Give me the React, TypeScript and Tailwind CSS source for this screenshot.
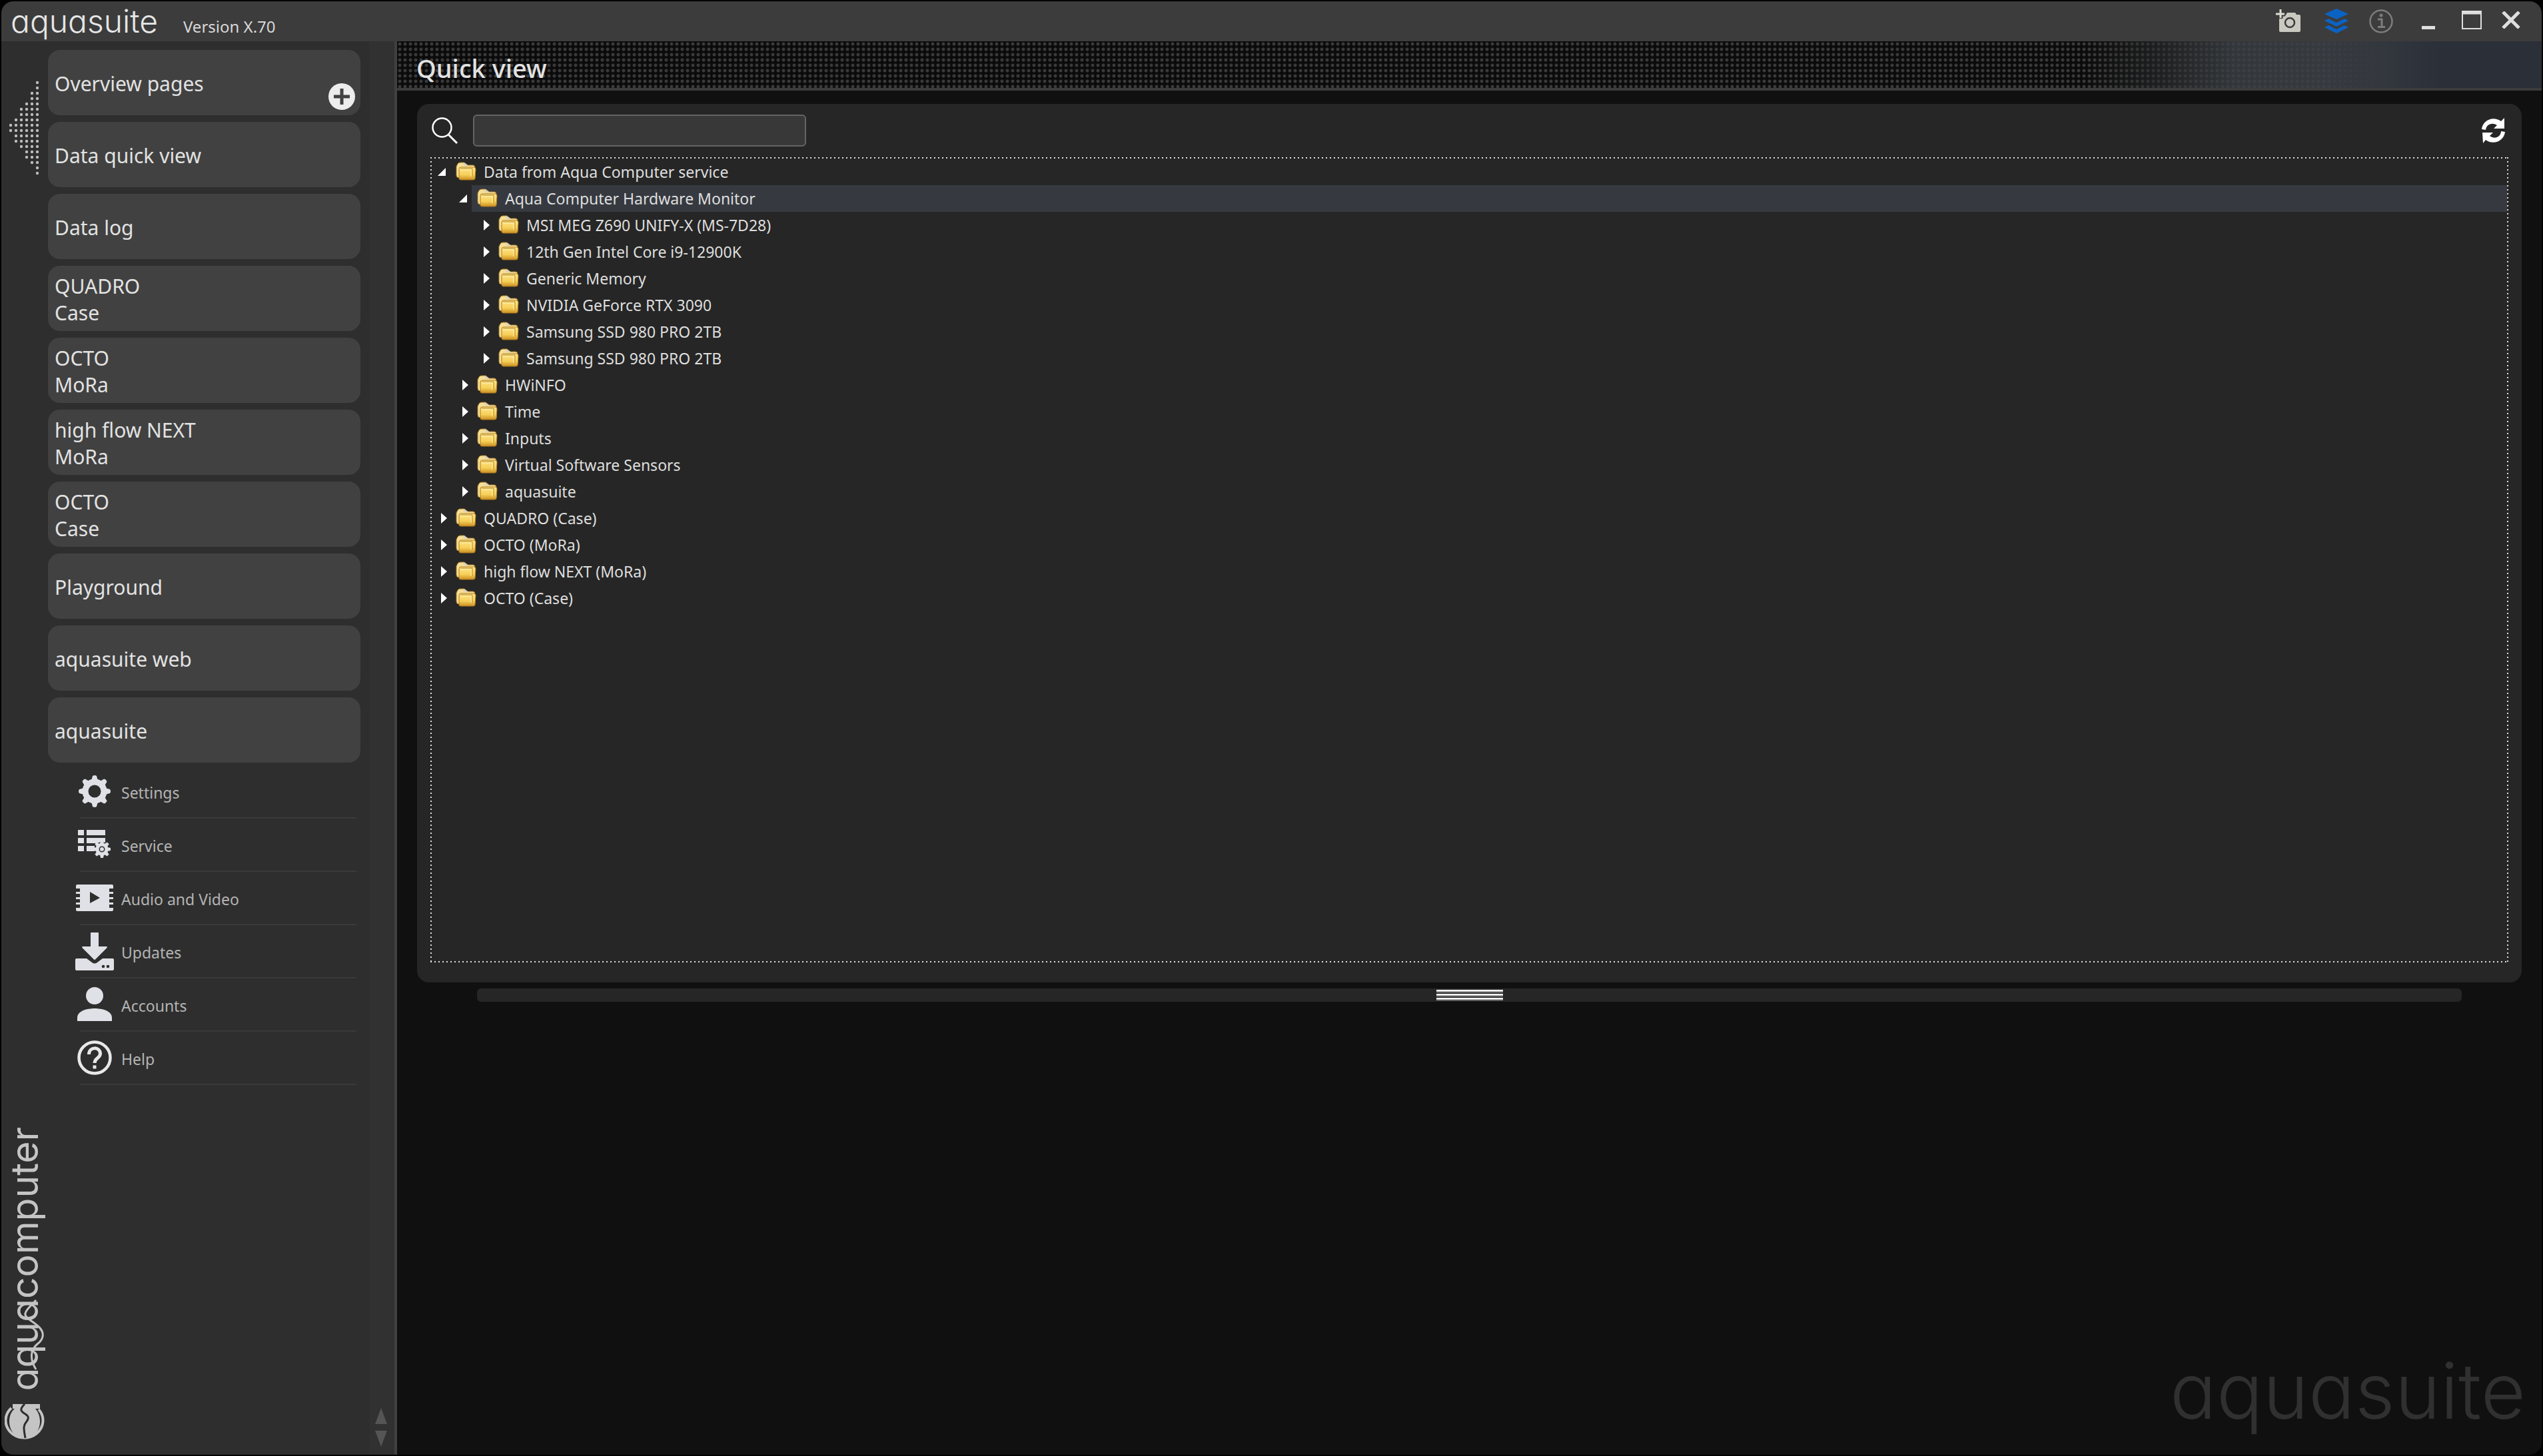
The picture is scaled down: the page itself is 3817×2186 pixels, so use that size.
import { useState } from 'react';
import clsx from 'clsx';

type TreeNode = { label: string; level: number; open?: boolean };

const devices = [
  ['Overview pages'],
  ['Data quick view'],
  ['Data log'],
  ['QUADRO', 'Case'],
  ['OCTO', 'MoRa'],
  ['high flow NEXT', 'MoRa'],
  ['OCTO', 'Case'],
  ['Playground'],
  ['aquasuite web'],
  ['aquasuite'],
];

const nodes: TreeNode[] = [
  { label: 'Data from Aqua Computer service', level: 0, open: true },
  { label: 'Aqua Computer Hardware Monitor', level: 1, open: true },
  { label: 'MSI MEG Z690 UNIFY-X (MS-7D28)', level: 2 },
  { label: '12th Gen Intel Core i9-12900K', level: 2 },
  { label: 'Generic Memory', level: 2 },
  { label: 'NVIDIA GeForce RTX 3090', level: 2 },
  { label: 'Samsung SSD 980 PRO 2TB', level: 2 },
  { label: 'Samsung SSD 980 PRO 2TB', level: 2 },
  { label: 'HWiNFO', level: 1 },
  { label: 'Time', level: 1 },
  { label: 'Inputs', level: 1 },
  { label: 'Virtual Software Sensors', level: 1 },
  { label: 'aquasuite', level: 1 },
  { label: 'QUADRO (Case)', level: 0 },
  { label: 'OCTO (MoRa)', level: 0 },
  { label: 'high flow NEXT (MoRa)', level: 0 },
  { label: 'OCTO (Case)', level: 0 },
];

const indents = ['ml-0', 'ml-[32px]', 'ml-[64px]'];

// number of lit dots per row of the collapse arrow
const arrowRows = [1, 1, 2, 2, 3, 4, 4, 5, 6, 6, 5, 5, 4, 3, 3, 2, 1, 1];

function CollapseArrow() {
  return (
    <svg width="48" height="146" viewBox="0 0 48 146" fill="#bdbdbd" aria-hidden="true">
      {arrowRows.map((count, row) =>
        Array.from({ length: count }, (_, i) => (
          <circle key={`${row}-${i}`} cx={44 - i * 8} cy={4 + row * 8} r="2.2" />
        )),
      )}
    </svg>
  );
}

function FolderIcon() {
  return (
    <svg width="32" height="30" viewBox="0 0 32 30" aria-hidden="true">
      <defs>
        <linearGradient id="folder" x1="0" y1="0" x2="0" y2="1">
          <stop offset="0" stopColor="#fde68c" />
          <stop offset="0.6" stopColor="#f7cf58" />
          <stop offset="1" stopColor="#c98f22" />
        </linearGradient>
      </defs>
      <path d="M2 7 4 3Q5 1 8 1H14L19 5H27Q30 5 30 9V24H6Q2 24 2 20Z" fill="#f6df94" stroke="#a67a2b" />
      <path d="M13 1 19 5 17 7 12 4Z" fill="#d8d3c4" />
      <path d="M6 11Q6 8 9 8H28Q31 8 31 11L30 25Q30 27 27 27H9Q6 27 6 25Z" fill="url(#folder)" stroke="#b07a1f" />
      <path d="M8 10H26V22" fill="none" stroke="#b98a2c" />
      <path d="M8 12H24V22" fill="none" stroke="#fff3b5" />
    </svg>
  );
}

function SettingsIcon() {
  return (
    <svg width="48" height="48" viewBox="0 0 48 48" fill="#e0e1e6" aria-hidden="true">
      {[0, 45, 90, 135, 180, 225, 270, 315].map((a) => (
        <path key={a} d="M18 12 21 1Q24-1 27 1L30 12Z" transform={`rotate(${a} 24 24)`} />
      ))}
      <circle cx="24" cy="24" r="14" fill="none" stroke="#e0e1e6" strokeWidth="9" />
    </svg>
  );
}

function ServiceIcon() {
  return (
    <svg width="52" height="46" viewBox="0 0 52 46" fill="#e0e1e6" aria-hidden="true">
      <path d="M1 1h9v8H1zM1 13h9v8H1zM1 25h9v8H1zM14 1h28v8H14zM14 13h28v8H14zM14 25h12v8H14z" />
      <circle cx="37" cy="30" r="11" fill="#2e2e2e" />
      {[0, 45, 90, 135, 180, 225, 270, 315].map((a) => (
        <path key={a} d="M34 22 35 17H39L40 22Z" transform={`rotate(${a} 37 30)`} />
      ))}
      <circle cx="37" cy="30" r="7" fill="none" stroke="#e0e1e6" strokeWidth="5" />
      <circle cx="37" cy="30" r="3" />
    </svg>
  );
}

function VideoIcon() {
  return (
    <svg width="56" height="40" viewBox="0 0 56 40" aria-hidden="true">
      <rect width="56" height="40" rx="2" fill="#e0e1e6" />
      <path d="M0 6h6v5H0zM0 14h6v5H0zM0 22h6v5H0zM0 30h6v5H0zM50 6h6v5h-6zM50 14h6v5h-6zM50 22h6v5h-6zM50 30h6v5h-6z" fill="#2e2e2e" />
      <path d="M21 11 36 20 21 28Z" fill="#2e2e2e" />
    </svg>
  );
}

function UpdatesIcon() {
  return (
    <svg width="58" height="58" viewBox="0 0 58 58" fill="#e0e1e6" aria-hidden="true">
      <path d="M2 40H17L25 46Q29 49 33 46L41 40H56Q58 40 58 42V56Q58 58 56 58H2Q0 58 0 56V42Q0 40 2 40Z" />
      <path
        d="M22 2Q22 0 24 0H34Q36 0 36 2V21H47Q50 22 48 25L31 42Q29 44 27 42L10 25Q8 22 11 21H22Z"
        stroke="#2e2e2e"
        strokeWidth="2"
      />
      <circle cx="42" cy="52" r="2.3" fill="#2e2e2e" />
      <circle cx="49" cy="52" r="2.3" fill="#2e2e2e" />
    </svg>
  );
}

function AccountsIcon() {
  return (
    <svg width="52" height="52" viewBox="0 0 52 52" fill="#e0e1e6" aria-hidden="true">
      <circle cx="26" cy="13" r="13" />
      <path d="M0 51V46C0 36 14 32 26 32S52 36 52 46V51Z" />
    </svg>
  );
}

function HelpIcon() {
  return (
    <svg width="52" height="52" viewBox="0 0 52 52" fill="none" stroke="#e8e8e8" aria-hidden="true">
      <circle cx="26" cy="26" r="23.5" strokeWidth="4.5" />
      <path d="M17.5 21C17.5 9 34.5 9 34.5 20C34.5 27 26 26 26 34" strokeWidth="5" />
      <path d="M26 37.5V42.5" strokeWidth="5" />
    </svg>
  );
}

const menu = [
  { label: 'Settings', icon: <SettingsIcon /> },
  { label: 'Service', icon: <ServiceIcon /> },
  { label: 'Audio and Video', icon: <VideoIcon /> },
  { label: 'Updates', icon: <UpdatesIcon /> },
  { label: 'Accounts', icon: <AccountsIcon /> },
  { label: 'Help', icon: <HelpIcon /> },
];

function TitleBar() {
  return (
    <header className="flex h-[60px] shrink-0 items-center justify-between bg-[#3c3c3c] pl-[14px] pr-8">
      <div className="flex items-baseline gap-[38px]">
        <span className="font-[Inter] text-[48px] leading-[60px] font-light text-[#e6e6e6] [font-feature-settings:'cv11']">
          aquasuite
        </span>
        <span className="text-[24px] text-[#d8d8d8]">Version X.70</span>
      </div>
      <div className="flex items-center">
        <button aria-label="Add snapshot" className="mr-[34px]">
          <svg width="38" height="36" viewBox="0 0 38 36" aria-hidden="true">
            <path d="M5 10H14L17 5H29L31 8H35Q37 8 37 10V32Q37 34 35 34H7Q5 34 5 32Z" fill="#c9c9c0" />
            <circle cx="21" cy="20" r="7" fill="none" stroke="#3c3c3c" strokeWidth="2.5" />
            <path d="M7 0V14M0 7H14" stroke="#3c3c3c" strokeWidth="7" />
            <path d="M7 0V13M0 7H13" stroke="#dcdcd4" strokeWidth="3" />
          </svg>
        </button>
        <button aria-label="Layers" className="mr-[30px]">
          <svg width="38" height="40" viewBox="0 0 38 40" fill="#0a63c4" aria-hidden="true">
            <path d="M19 1 37 9 19 17 1 9Z" />
            <path d="M1 19 7 16 19 22 31 16 37 19 19 28Z" />
            <path d="M1 29 7 26 19 32 31 26 37 29 19 38Z" />
          </svg>
        </button>
        <button aria-label="Info" className="mr-[43px]">
          <svg width="36" height="36" viewBox="0 0 36 36" fill="none" stroke="#7d7d7d" aria-hidden="true">
            <circle cx="18" cy="18" r="16.5" strokeWidth="2.5" />
            <path d="M13 15H19V27M13 26.5H24" strokeWidth="3" />
            <circle cx="18" cy="9" r="2.5" fill="#7d7d7d" stroke="none" />
          </svg>
        </button>
        <div className="flex items-center pb-1">
          <button aria-label="Minimize" className="mr-10">
            <svg width="20" height="28" aria-hidden="true">
              <path d="M0 23h20v5H0z" fill="#dedede" />
            </svg>
          </button>
          <button aria-label="Maximize" className="mr-[30px]">
            <svg width="30" height="28" viewBox="0 0 30 28" fill="none" stroke="#dedede" aria-hidden="true">
              <rect x="1" y="1" width="28" height="26" strokeWidth="2" />
              <path d="M0 3H30" strokeWidth="5" />
            </svg>
          </button>
          <button aria-label="Close">
            <svg width="28" height="26" viewBox="0 0 28 26" stroke="#dedede" strokeWidth="5" aria-hidden="true">
              <path d="M2 1 26 25M26 1 2 25" />
            </svg>
          </button>
        </div>
      </div>
    </header>
  );
}

function Sidebar() {
  return (
    <aside className="flex w-[594px] shrink-0 border-r-4 border-[#404040] bg-[#2e2e2e]">
      <div className="flex w-[70px] shrink-0 flex-col items-start justify-between pt-[58px] pb-[18px]">
        <button aria-label="Collapse sidebar" className="ml-[10px]">
          <CollapseArrow />
        </button>
        <div className="flex flex-col items-start gap-5">
          <div className="relative">
            <span className="block rotate-180 font-[Inter] text-[57px] leading-[70px] text-[#c4c4c4] [font-feature-settings:'cv11'] [writing-mode:vertical-rl]">
              aquacomputer
            </span>
            <svg
              width="70"
              height="140"
              viewBox="0 0 70 140"
              fill="none"
              stroke="#c4c4c4"
              strokeWidth="3"
              className="absolute bottom-0 left-0"
              aria-hidden="true"
            >
              <path d="M52 108C42 92 44 78 54 70C66 61 64 50 54 42C46 35 34 30 36 24C38 16 46 12 52 4" />
            </svg>
          </div>
          <svg width="60" height="58" viewBox="0 0 60 58" className="ml-[5px]" aria-hidden="true">
            <path d="M10 6A28 26 0 1 0 51 8" fill="none" stroke="#c4c4c4" strokeWidth="4" />
            <path d="M12 0H53V7H46C50 11 53 18 53 26C53 40 44 51 30 51S7 40 7 26C7 18 10 11 15 7H12Z" fill="#c4c4c4" />
            <path d="M30 0C22 8 24 11 31 15C37 19 36 22 33 26C28 32 28 35 31 51" fill="none" stroke="#2e2e2e" strokeWidth="3" />
          </svg>
        </div>
      </div>
      <nav className="flex min-w-0 flex-1 flex-col pt-[13px]">
        <div className="flex flex-col gap-[10px] pr-[14px]">
          {devices.map((lines, i) => (
            <div
              key={i}
              className="flex h-[98px] items-center justify-between rounded-[18px] bg-[#414141] pl-[10px] pr-2"
            >
              <button className="pt-1 text-left text-[30px] leading-10 text-[#e2e2e2]">
                {lines.map((line) => (
                  <span key={line} className="block">
                    {line}
                  </span>
                ))}
              </button>
              {i === 0 && (
                <button aria-label="Add page" className="mb-2 self-end">
                  <svg width="40" height="40" viewBox="0 0 40 40" aria-hidden="true">
                    <circle cx="20" cy="20" r="20" fill="#ededed" />
                    <path d="M20 8V32M8 20H32" stroke="#414141" strokeWidth="5" />
                  </svg>
                </button>
              )}
            </div>
          ))}
        </div>
        <ul className="mt-1 mr-5 ml-12">
          {menu.map((item) => (
            <li key={item.label} className="h-20 border-b-2 border-[#3a3a3a]">
              <a href="#" className="flex h-full items-center text-[23px] text-[#b4b4b4]">
                <span className="-ml-2 mr-[10px] flex w-[60px] justify-center">{item.icon}</span>
                <span className="pt-1">{item.label}</span>
              </a>
            </li>
          ))}
        </ul>
      </nav>
      <div className="flex w-[37px] shrink-0 flex-col items-center justify-end bg-[#313131] pr-1 pb-3">
        <svg width="20" height="58" viewBox="0 0 20 58" fill="#555" aria-hidden="true">
          <path d="M10 0 19 24H1Z" />
          <path d="M10 58 19 34H1Z" />
        </svg>
      </div>
    </aside>
  );
}

function Tree() {
  const [selected, setSelected] = useState(1);

  return (
    <ul
      role="tree"
      className="mx-5 flex-1 border-2 border-transparent [background:repeating-linear-gradient(90deg,#e0e0e0_0_2px,transparent_2px_6px)_top/100%_2px_no-repeat_border-box,repeating-linear-gradient(90deg,#e0e0e0_0_2px,transparent_2px_6px)_bottom/100%_2px_no-repeat_border-box,repeating-linear-gradient(180deg,#e0e0e0_0_2px,transparent_2px_6px)_left/2px_100%_no-repeat_border-box,repeating-linear-gradient(180deg,#e0e0e0_0_2px,transparent_2px_6px)_right/2px_100%_no-repeat_border-box]"
    >
      {nodes.map((node, i) => (
        <li key={i} role="treeitem" aria-selected={selected === i} aria-expanded={!!node.open} className="flex h-10">
          <span
            className={clsx(
              'flex w-[28px] shrink-0 items-center justify-end',
              node.open ? 'pr-[7px]' : 'pr-[5px]',
              indents[node.level],
            )}
          >
            {node.open ? (
              <svg width="12" height="12" aria-hidden="true">
                <path d="M12 0V12H0Z" fill="#fff" />
              </svg>
            ) : (
              <svg width="9" height="16" aria-hidden="true">
                <path d="M0 0 9 8 0 16Z" fill="#fff" />
              </svg>
            )}
          </span>
          <button
            onClick={() => setSelected(i)}
            className={clsx(
              'flex min-w-0 flex-1 items-center gap-[11px] pl-[7px] text-left text-[23px] leading-[30px] text-[#dedede]',
              selected === i && 'bg-[#363a40]',
            )}
          >
            <FolderIcon />
            {node.label}
          </button>
        </li>
      ))}
    </ul>
  );
}

export default function App() {
  return (
    <div className="flex h-screen flex-col bg-black p-[2px] font-['Noto_Sans',sans-serif]">
      <div className="flex min-h-0 flex-1 flex-col overflow-hidden rounded-[18px]">
        <TitleBar />
        <div className="flex min-h-0 flex-1">
          <Sidebar />
          <main className="flex min-w-0 flex-1 flex-col bg-[#101010]">
            {/* Page heading */}
            <div className="flex h-[74px] shrink-0 border-b-4 border-[#3c3c3c] bg-[#0b0b0b]">
              <div className="flex flex-1 items-center [background:linear-gradient(90deg,transparent_calc(100%-690px),#2a2b2d99_calc(100%-580px),#3c4045d0_calc(100%-460px),#3c4046e0_calc(100%-330px),#33373e_calc(100%-240px),#2b2f38_calc(100%-150px)),radial-gradient(circle,#3a3a3a_1px,#3a3a3a_2px,transparent_3px)_0_0/8px_8px] pt-[10px] pl-[29px]">
                <h1 className="text-[38px] leading-[48px] font-medium text-[#e2e2e2]">Quick view</h1>
              </div>
            </div>

            {/* Data sources */}
            <section className="mx-[30px] mt-5 flex h-[1319px] shrink-0 flex-col rounded-[18px] bg-[#262626] pb-[30px]">
              <div className="flex h-20 shrink-0 items-center justify-between pl-[22px] pr-6">
                <div className="flex items-center gap-[22px]">
                  <label htmlFor="search" aria-label="Search">
                    <svg width="40" height="40" viewBox="0 0 40 40" fill="none" stroke="#fff" aria-hidden="true">
                      <circle cx="15.5" cy="15.5" r="14" strokeWidth="2.5" />
                      <path d="M25 26 38 39" strokeWidth="3" />
                    </svg>
                  </label>
                  <input
                    id="search"
                    type="text"
                    className="h-12 w-[500px] rounded-md border-2 border-[#646464] bg-[#383838] px-2 text-[23px] text-[#dedede]"
                  />
                </div>
                <button aria-label="Refresh">
                  <svg width="36" height="38" viewBox="0 0 36 38" fill="#fff" aria-hidden="true">
                    <path d="M0 17C1 4 17-4 29 5L34 0V16H18L23 11C15 6 7 10 6 18Z" />
                    <path d="M35 21C34 34 18 42 6 33L2 38 1 22 17 22 12 27C20 33 29 28 29 20Z" />
                  </svg>
                </button>
              </div>
              <Tree />
            </section>

            {/* Splitter */}
            <div className="mx-[120px] mt-[9px] flex h-5 shrink-0 items-center justify-center rounded-md bg-[#262626]">
              <div className="h-4 w-[100px] bg-[repeating-linear-gradient(180deg,#fff_0_2px,#a0a0a0_2px_4px,transparent_4px_6px)]" />
            </div>

            <div className="flex flex-1 items-end justify-end pr-6 pb-[26px]">
              <span className="font-[Inter] text-[116px] leading-[140px] font-light text-[#303030] [font-feature-settings:'cv11']">
                aquasuite
              </span>
            </div>
          </main>
        </div>
      </div>
    </div>
  );
}
